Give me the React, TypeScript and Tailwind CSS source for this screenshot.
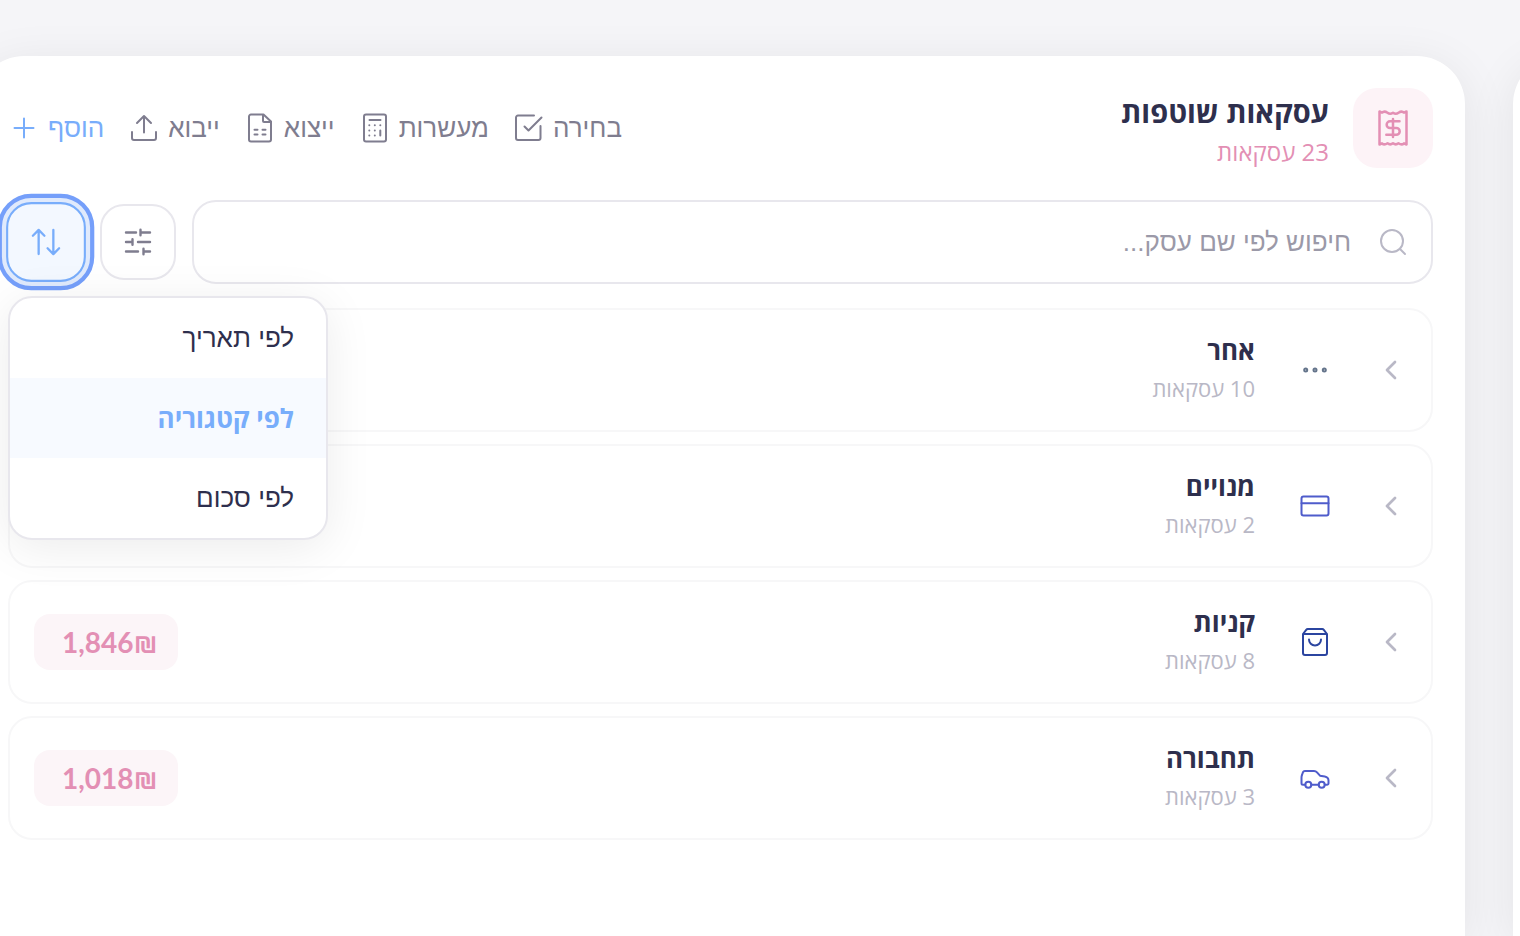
import { useState } from 'react';
import type { ReactNode } from 'react';

type IconProps = {
  children: ReactNode;
  className?: string;
  strokeWidth?: number;
};

const Icon = ({ children, className = 'size-8', strokeWidth = 2 }: IconProps) => (
  <svg
    viewBox="0 0 32 32"
    fill="none"
    stroke="currentColor"
    strokeWidth={strokeWidth}
    strokeLinecap="round"
    strokeLinejoin="round"
    aria-hidden="true"
    className={`shrink-0 ${className}`}
  >
    {children}
  </svg>
);

const actions = [
  {
    label: 'בחירה',
    color: 'text-[#7f7d8f]',
    icon: (
      <>
        <path d="M21 3.500H5a2 2 0 0 0-2 2V26a2 2 0 0 0 2 2h20.500a2 2 0 0 0 2-2V14" />
        <path d="M11.500 14.500l4 4L28.500 5.500" />
      </>
    ),
  },
  {
    label: 'מעשרות',
    color: 'text-[#7f7d8f]',
    icon: (
      <>
        <rect x="5" y="2.500" width="22" height="27" rx="2" />
        <path d="M10.500 8h11M21.300 18.500v5" />
        <path d="M10.300 13.300h.01M15.800 13.300h.01M21.300 13.300h.01M10.300 18.400h.01M15.800 18.400h.01M10.300 23.600h.01M15.800 23.600h.01" />
      </>
    ),
  },
  {
    label: 'ייצוא',
    color: 'text-[#7f7d8f]',
    icon: (
      <>
        <path d="M19.500 2.500H7a2 2 0 0 0-2 2v23a2 2 0 0 0 2 2h18a2 2 0 0 0 2-2V9.500z" />
        <path d="M19 3v6a1 1 0 0 0 1 1h7M10.500 17.700h3M18.500 17.700h3M10.500 22.500h3M18.500 22.500h3" />
      </>
    ),
  },
  {
    label: 'ייבוא',
    color: 'text-[#7f7d8f]',
    icon: (
      <>
        <path d="M4 20v6a2 2 0 0 0 2 2h20a2 2 0 0 0 2-2v-6" />
        <path d="M16 20.500V4M9 11l7-7 7 7" />
      </>
    ),
  },
  {
    label: 'הוסף',
    color: 'text-[#78adfb]',
    icon: <path d="M16 6.500v19M6.500 16h19" />,
  },
];

const groups = [
  {
    name: 'אחר',
    count: 10,
    color: 'text-[#64748b]',
    icon: (
      <>
        <circle cx="6.700" cy="16" r="1.500" />
        <circle cx="16" cy="16" r="1.500" />
        <circle cx="25.300" cy="16" r="1.500" />
      </>
    ),
  },
  {
    name: 'מנויים',
    count: 2,
    color: 'text-[#4f5ccb]',
    icon: (
      <>
        <rect x="2.500" y="6.500" width="27" height="19" rx="2" />
        <path d="M2.500 13.300h27" />
      </>
    ),
  },
  {
    name: 'קניות',
    count: 8,
    color: 'text-[#2b45a0]',
    amount: '1,846₪',
    icon: (
      <>
        <path d="M4 8V27a2 2 0 0 0 2 2h20a2 2 0 0 0 2-2V8l-3.200-4.200a2 2 0 0 0-1.600-.8H8.800a2 2 0 0 0-1.600.8zM4 8h24" />
        <path d="M10 13.500a6 6 0 0 0 12 0" />
      </>
    ),
  },
  {
    name: 'תחבורה',
    count: 3,
    color: 'text-[#4f5ccb]',
    amount: '1,018₪',
    icon: (
      <>
        <path d="M6.300 22.700H4a1.500 1.500 0 0 1-1.500-1.500v-5.500q0-1.500.5-2.700l1-2.800a2 2 0 0 1 1.900-1.300H15a4 4 0 0 1 3 1.400l3 3.400 4.800.9c2.500.5 3.700 1.700 3.700 4v2.600a1.500 1.500 0 0 1-1.500 1.500h-2.300M12.300 22.700h7.400" />
        <circle cx="9.300" cy="22.700" r="3" />
        <circle cx="22.700" cy="22.700" r="3" />
      </>
    ),
  },
];

const sortOptions = ['לפי תאריך', 'לפי קטגוריה', 'לפי סכום'];

const SortMenu = () => {
  const [open, setOpen] = useState(true);
  const [selected, setSelected] = useState('לפי קטגוריה');

  return (
    <div className="relative">
      <button
        type="button"
        aria-label="מיון"
        aria-expanded={open}
        onClick={() => setOpen(!open)}
        className="flex size-19 scale-105 items-center justify-center rounded-3xl border-2 border-[#78adfb] bg-[#f3f8ff] text-[#78adfb] shadow-[0_0_0_6px_#e0eafc] outline-4 outline-offset-4 outline-[#759ffa]"
      >
        <Icon strokeWidth={2.2}>
          <path d="M9 27.500V4.500M3.500 10L9 4.500l5.500 5.500M23 4.500v23M17.500 22l5.500 5.500 5.500-5.500" />
        </Icon>
      </button>
      {open && (
        <ul className="absolute left-0 top-full z-10 mt-4 w-80 overflow-hidden rounded-3xl border-2 border-[#e8e7ed] bg-white shadow-[0_8px_48px_rgba(0,0,0,0.08)]">
          {sortOptions.map((option) => (
            <li key={option}>
              <button
                type="button"
                onClick={() => setSelected(option)}
                className={`flex h-20 w-full items-center px-8 text-[26px] ${
                  option === selected
                    ? "bg-[#f7faff] font-['Open_Sans',sans-serif] font-bold text-[#78adfb]"
                    : 'text-[#2e2f4d]'
                }`}
              >
                {option}
              </button>
            </li>
          ))}
        </ul>
      )}
    </div>
  );
};

const App = () => {
  return (
    <div
      dir="rtl"
      className="flex min-h-screen gap-12 overflow-hidden bg-[#f5f5f8] pt-14 font-['Liberation_Sans',sans-serif] text-[#2e2f4d]"
    >
      <aside className="-ms-[313px] w-80 shrink-0 rounded-t-[48px] bg-white shadow-[0_8px_48px_rgba(0,0,0,0.08)]" />
      <main className="-me-6 flex min-w-0 flex-1 flex-col gap-6 rounded-t-[48px] bg-white p-8 shadow-[0_8px_48px_rgba(0,0,0,0.08)]">
        <header className="mb-2 flex items-center justify-between">
          <div className="flex items-center gap-6">
            <div className="flex size-20 items-center justify-center rounded-3xl bg-[#fdf3f7] text-[#e38fb4]">
              <svg
                viewBox="0 0 40 40"
                fill="none"
                stroke="currentColor"
                strokeWidth="2.5"
                strokeLinecap="round"
                strokeLinejoin="round"
                aria-hidden="true"
                className="size-10"
              >
                <path d="M6.500 3.500v33l2.500-1.200q2.200 2.200 5.500 0 2.700 2.200 5.500 0 2.800 2.200 5.500 0 3.300 2.200 5.500 0l2.500 1.200v-33l-2.500 1.200q-2.200-2.200-5.500 0-2.700 2.200-5.500 0-2.800 2.200-5.500 0-3.300-2.200-5.500 0z" />
                <path d="M20 11v18M26.500 13.300H17a3.300 3.300 0 0 0 0 6.700h6.300a3.400 3.400 0 0 1 0 6.800h-10" />
              </svg>
            </div>
            <div className="flex flex-col font-['Open_Sans',sans-serif]">
              <h1 className="text-[29px] font-bold leading-12">עסקאות שוטפות</h1>
              <p className="text-2xl leading-8 text-[#e38fb4]">23 עסקאות</p>
            </div>
          </div>
          <nav className="flex items-center gap-6">
            {actions.map((action) => (
              <button
                key={action.label}
                type="button"
                className={`flex items-center gap-2 text-[26px] leading-10 ${action.color}`}
              >
                {action.label}
                <Icon>{action.icon}</Icon>
              </button>
            ))}
          </nav>
        </header>

        <div className="flex items-center gap-4">
          <div className="flex h-21 flex-1 items-center gap-6 rounded-3xl border-2 border-[#e8e7ed] px-6 text-[#b9b8c6]">
            <label htmlFor="search" aria-label="חיפוש">
              <Icon>
                <circle cx="17" cy="15" r="11" />
                <path d="M25 23l5 5" />
              </Icon>
            </label>
            <input
              id="search"
              type="text"
              placeholder="חיפוש לפי שם עסק..."
              className="w-full text-[26px] text-[#2e2f4d] outline-none placeholder:text-[#9b99a8]"
            />
          </div>
          <button
            type="button"
            aria-label="סינון"
            className="flex size-19 items-center justify-center rounded-3xl border-2 border-[#e8e7ed] text-[#7f7d8f]"
          >
            <Icon strokeWidth={2.4}>
              <path d="M4 6.500h10M18.500 3.800v5.400M18.500 6.500H28M4 16h6.500M10.500 13.300v5.400M16 16h12M4 25.500h12M21.500 22.800v5.400M21.500 25.500H28" />
            </Icon>
          </button>
          <SortMenu />
        </div>

        <ul className="flex flex-col gap-3">
          {groups.map((group) => (
            <li key={group.name}>
              <button
                type="button"
                className="flex w-full items-center gap-6 rounded-3xl border-2 border-[#f7f7f8] p-6 text-start"
              >
                <Icon className="size-8 text-[#b9b8c6]" strokeWidth={2.7}>
                  <path d="M20 8l-8 8 8 8" />
                </Icon>
                <span className={`flex size-18 items-center justify-center ${group.color}`}>
                  <Icon>{group.icon}</Icon>
                </span>
                <span className="flex flex-1 flex-col gap-1 font-['Open_Sans',sans-serif]">
                  <span className="text-[26px] font-bold leading-8">{group.name}</span>
                  <span className="text-[22px] leading-9 text-[#b9b8c6]">{group.count} עסקאות</span>
                </span>
                {group.amount && (
                  <span className="flex h-14 items-center rounded-2xl bg-[#fcf5f8] pe-7 ps-5 font-[Lato,'DejaVu_Sans',sans-serif] text-[28px] font-bold text-[#e38fb4]">
                    {group.amount}
                  </span>
                )}
              </button>
            </li>
          ))}
        </ul>
      </main>
    </div>
  );
};

export default App;
